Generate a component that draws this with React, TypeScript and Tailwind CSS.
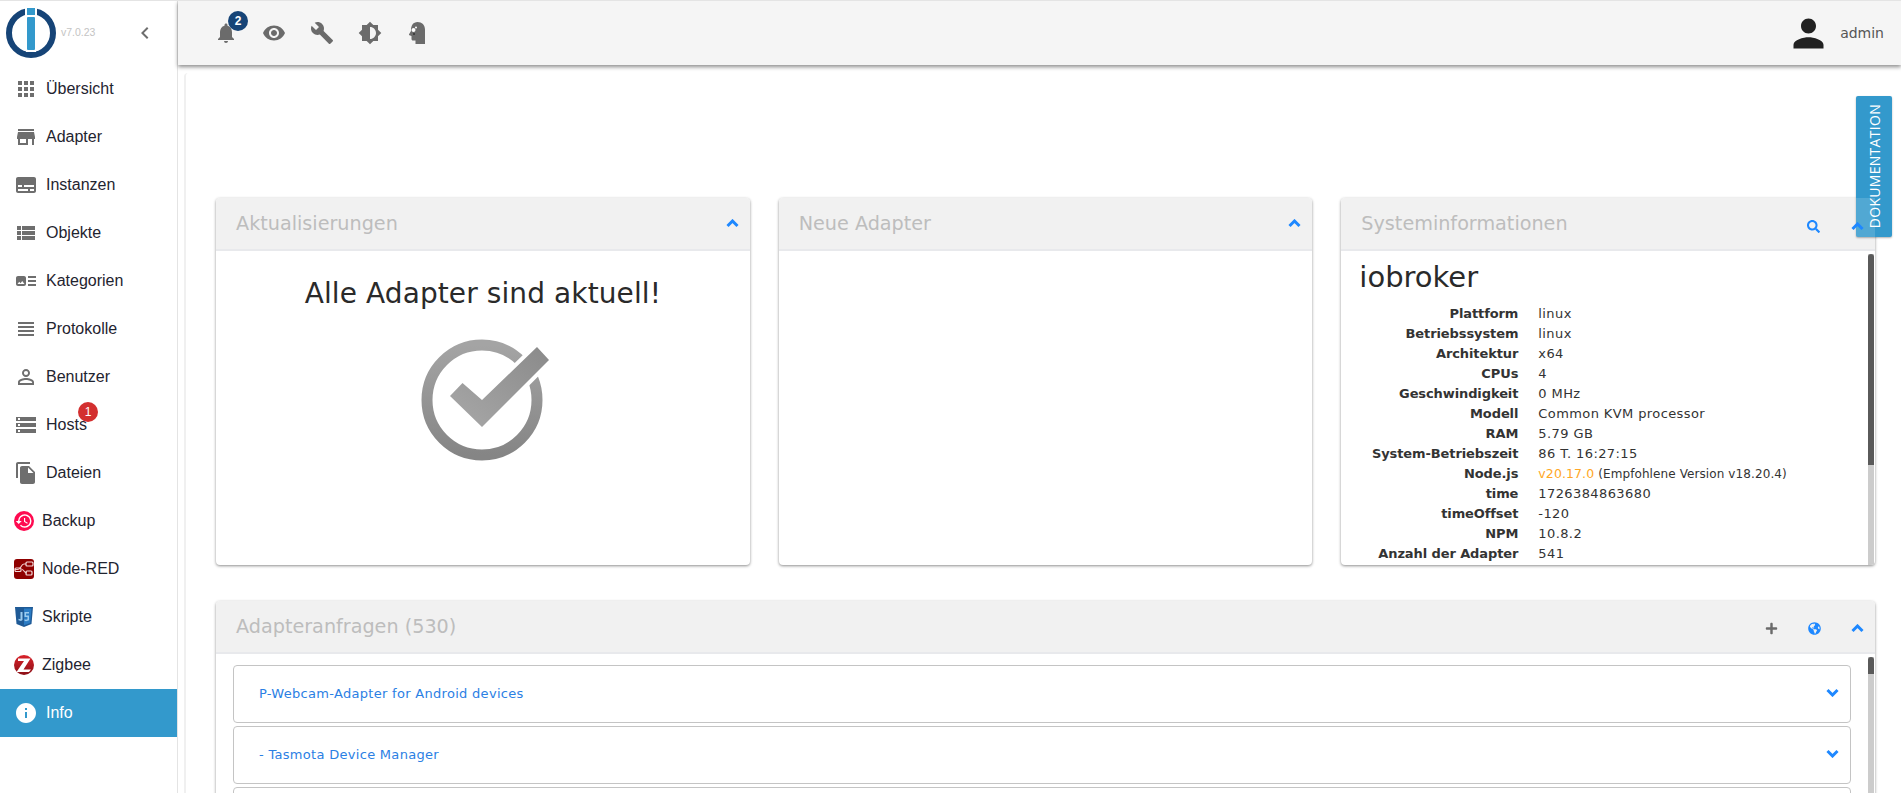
import React from 'react';
import {
  MdApps, MdStore, MdSubtitles, MdViewList, MdArtTrack, MdViewHeadline, MdPermIdentity,
  MdStorage, MdFileCopy, MdInfo, MdNotifications, MdVisibility, MdBuild, MdBrightness6,
  MdPerson, MdHistory, MdChevronLeft,
} from 'react-icons/md';
import { FaSearch, FaPlus, FaGlobeAmericas } from 'react-icons/fa';

const bodyFont = "font-['DejaVu_Sans',sans-serif]";

const Logo = () => (
  <svg width="52" height="52" viewBox="0 0 52 52" className="shrink-0">
    <circle cx="25" cy="26" r="22" fill="none" stroke="#164477" strokeWidth="6" />
    <rect x="19" y="0" width="12" height="12" fill="#fff" />
    <rect x="21" y="1" width="8" height="7" fill="#3399cc" />
    <rect x="20" y="9" width="10" height="36" fill="#fff" />
    <rect x="21" y="10" width="8" height="33" rx="1" fill="#3399cc" />
  </svg>
);

const Chevron = ({ down, className }: { down?: boolean; className?: string }) => (
  <svg width="13" height="9" viewBox="0 0 13 9" className={`shrink-0 ${className ?? ''}`}>
    <path d={down ? 'M1.500 2L6.500 7L11.500 2' : 'M1.500 7L6.500 2L11.500 7'} fill="none" stroke="#1e88ff" strokeWidth="3" />
  </svg>
);

const BackupIcon = () => (
  <span className="flex h-5 w-5 items-center justify-center rounded-full bg-[#ff0a50] text-white">
    <MdHistory size={18} />
  </span>
);

const NodeRedIcon = () => (
  <svg width="20" height="20" viewBox="0 0 20 20">
    <rect width="20" height="20" rx="3" fill="#8f0000" />
    <path d="M1 10.500h3c3 0 3-5.500 6-5.500h2M8 10.500c2 0 2 3.500 5 3.500" fill="none" stroke="#f3c9c9" strokeWidth="1.200" />
    <rect x="12" y="3" width="7" height="4" rx="1" fill="none" stroke="#f3dada" strokeWidth="1.200" />
    <rect x="12" y="12" width="6" height="4" rx="1" fill="none" stroke="#f3dada" strokeWidth="1.200" />
    <rect x="1" y="9" width="6" height="3.500" rx="1" fill="none" stroke="#f3dada" strokeWidth="1.200" />
  </svg>
);

const JsIcon = () => (
  <svg width="20" height="20" viewBox="0 0 20 20">
    <path d="M1 0h18l-1.500 17L10 20l-7.500-3z" fill="#1f5a96" />
    <path d="M10 1.500h7.500L16.200 16 10 18.200z" fill="#2b7cc4" />
    <path d="M8.500 5v8l-1.500 1-2.500-.8v-1.500l2 .6V5zM15 5h-4.500v5h3v2.200l-1.500.6-1.500-.5v1.400l1.500.6 3-1V8.500h-3V6.500H15z" fill="#9ccbee" />
  </svg>
);

const ZigbeeIcon = () => (
  <svg width="20" height="20" viewBox="0 0 20 20">
    <defs>
      <linearGradient id="zigbeeFill" x1="0" y1="0" x2="0" y2="1">
        <stop offset="0" stopColor="#d9222a" />
        <stop offset="1" stopColor="#8a0f16" />
      </linearGradient>
    </defs>
    <circle cx="10" cy="10" r="10" fill="url(#zigbeeFill)" />
    <path d="M4 3.500h12.500L9.500 14.500h7.500L15 17H2.500L10 6H4z" fill="#fff" />
  </svg>
);

const HeadIcon = () => (
  <svg width="16" height="22" viewBox="0 0 16 22" className="ml-[3px]">
    <path d="M8.500 0C13 0 16 3 16 7.500V22H6.500v-3.500H4c-1 0-1.500-.7-1.500-1.500v-3L.4 13.200c-.5-.3-.5-.7-.2-1.100L2 9C1.700 4 4 0 8.500 0z" fill="#6b6b6b" />
    <circle cx="4.500" cy="8" r="2" fill="#fff" />
    <circle cx="7" cy="5.500" r="1" fill="#fff" />
    <circle cx="5" cy="12" r="1" fill="#333" />
  </svg>
);

const CheckBadge = () => (
  <svg width="122" height="124" viewBox="0 0 122 124" className="overflow-visible">
    <defs>
      <linearGradient id="ringFill" x1="0" y1="0" x2="0" y2="1">
        <stop offset="0" stopColor="#a4a4a4" />
        <stop offset="1" stopColor="#858585" />
      </linearGradient>
      <linearGradient id="markFill" x1="0" y1="1" x2="1" y2="0">
        <stop offset="0" stopColor="#a8a8a8" />
        <stop offset="1" stopColor="#8a8a8a" />
      </linearGradient>
    </defs>
    <circle cx="60" cy="62" r="55" fill="none" stroke="url(#ringFill)" strokeWidth="11" />
    <path d="M115 9 L127 22 L60 89 L28 58 L40.500 45 L60 62 Z" fill="url(#markFill)" stroke="#fff" strokeWidth="8" paintOrder="stroke" />
  </svg>
);

const navItems = [
  { label: 'Übersicht', icon: <MdApps size={24} /> },
  { label: 'Adapter', icon: <MdStore size={24} /> },
  { label: 'Instanzen', icon: <MdSubtitles size={24} /> },
  { label: 'Objekte', icon: <MdViewList size={24} /> },
  { label: 'Kategorien', icon: <MdArtTrack size={24} /> },
  { label: 'Protokolle', icon: <MdViewHeadline size={24} /> },
  { label: 'Benutzer', icon: <MdPermIdentity size={24} /> },
  { label: 'Hosts', icon: <MdStorage size={24} />, badge: '1' },
  { label: 'Dateien', icon: <MdFileCopy size={24} /> },
  { label: 'Backup', icon: <BackupIcon />, custom: true },
  { label: 'Node-RED', icon: <NodeRedIcon />, custom: true },
  { label: 'Skripte', icon: <JsIcon />, custom: true },
  { label: 'Zigbee', icon: <ZigbeeIcon />, custom: true },
  { label: 'Info', icon: <MdInfo size={24} />, active: true },
];

const systemRows: [string, React.ReactNode][] = [
  ['Plattform', 'linux'],
  ['Betriebssystem', 'linux'],
  ['Architektur', 'x64'],
  ['CPUs', '4'],
  ['Geschwindigkeit', '0 MHz'],
  ['Modell', 'Common KVM processor'],
  ['RAM', '5.79 GB'],
  ['System-Betriebszeit', '86 T. 16:27:15'],
  ['Node.js', (
    <span className="text-[12px] tracking-[0.1px]">
      <span className="text-[12.5px] text-[#ffa726]">v20.17.0</span> (Empfohlene Version v18.20.4)
    </span>
  )],
  ['time', '1726384863680'],
  ['timeOffset', '-120'],
  ['NPM', '10.8.2'],
  ['Anzahl der Adapter', '541'],
];

const CardHeader = ({ title, gap = 'gap-[29px]', children }: { title: string; gap?: string; children: React.ReactNode }) => (
  <div className="flex h-[53px] shrink-0 items-center justify-between border-b-2 border-[#e8e9ec] bg-[#f1f1f1] pl-5 pr-[11px]">
    <span className="mt-[1px] text-[19.2px] text-[#bdbdbd]">{title}</span>
    <div className={`flex items-center ${gap}`}>{children}</div>
  </div>
);

const Scroll = ({ thumb }: { thumb: string }) => (
  <div className="absolute bottom-0 right-[1px] top-[3px] w-[6px] bg-[#cccccc]">
    <div className={`w-full rounded-t-[3px] bg-[#5a5a5a] ${thumb}`} />
  </div>
);

const RequestRow = ({ title }: { title?: string }) => (
  <div className="flex h-[58px] shrink-0 items-center justify-between rounded-[4px] border border-[#c4c4c4] pl-[25px] pr-[11px]">
    <span className="text-[13px] tracking-[0.3px] text-[#2b80e4]">{title}</span>
    <Chevron down className="mt-[-3px]" />
  </div>
);

export default function App() {
  return (
    <div className={`relative flex h-[793px] overflow-hidden border-t border-[#e4e4e4] bg-white ${bodyFont}`}>
      <aside className="w-[178px] shrink-0 border-r border-[#e4e4e4] font-['Liberation_Sans',sans-serif]">
        <div className="flex h-[64px] items-center pl-[6px] pr-[20px]">
          <Logo />
          <span className="ml-[3px] mt-[-1px] text-[10.5px] text-[#c4c4c4]">v7.0.23</span>
          <MdChevronLeft size={24} className="ml-auto text-[#6e6e6e]" />
        </div>
        <nav>
          {navItems.map(item => (
            <div
              key={item.label}
              className={`relative flex h-12 items-center pl-[14px] ${item.active ? 'bg-[#3399cc] text-white' : 'text-[#1f2430]'}`}
            >
              <span className={`flex shrink-0 items-center ${item.custom ? 'w-[28px]' : 'w-[32px]'} ${item.active ? 'text-white' : 'text-[#6e6e6e]'}`}>
                {item.icon}
              </span>
              <span className="text-base">{item.label}</span>
              {item.badge && (
                <span className="absolute left-[78px] top-[1px] flex h-5 w-5 items-center justify-center rounded-full bg-[#d32f2f] text-xs text-white">
                  {item.badge}
                </span>
              )}
            </div>
          ))}
        </nav>
      </aside>

      <div className="flex min-w-0 flex-1 flex-col">
        <header className="relative z-10 flex h-[64px] shrink-0 items-center bg-[#f5f5f5] pl-[36px] pr-[17px] shadow-[0_2px_4px_rgba(0,0,0,0.45)]">
          <div className="flex items-center gap-[24px] text-[#6b6b6b]">
            <span className="relative">
              <MdNotifications size={24} />
              <span className="absolute left-[14px] top-[-10px] flex h-5 w-5 items-center justify-center rounded-full bg-[#164477] font-['Liberation_Sans',sans-serif] text-xs font-bold text-white">2</span>
            </span>
            <MdVisibility size={24} />
            <MdBuild size={24} />
            <MdBrightness6 size={24} />
            <HeadIcon />
          </div>
          <div className="ml-auto flex items-center gap-[9px]">
            <MdPerson size={45} className="text-[#212121]" />
            <span className="mt-[1px] text-[14px] text-[#555555]">admin</span>
          </div>
        </header>

        <main className="ml-[6px] mt-[8px] flex-1 overflow-hidden rounded-tl-[4px] border-l-2 border-[#f0f0f0] bg-white pl-[30px] pr-[26px] pt-[125px]">
          <div className="grid grid-cols-3 gap-[29px]">
            <section className="flex h-[367px] flex-col overflow-hidden rounded-[4px] bg-white shadow-[0_1px_3px_rgba(0,0,0,0.45)]">
              <CardHeader title="Aktualisierungen">
                <Chevron />
              </CardHeader>
              <div className="flex flex-col items-center pt-[25px]">
                <div className="text-[28px] leading-[36px] tracking-[0.1px] text-[#2a2a2a]">Alle Adapter sind aktuell!</div>
                <div className="mt-[26px]">
                  <CheckBadge />
                </div>
              </div>
            </section>

            <section className="flex h-[367px] flex-col overflow-hidden rounded-[4px] bg-white shadow-[0_1px_3px_rgba(0,0,0,0.45)]">
              <CardHeader title="Neue Adapter">
                <Chevron />
              </CardHeader>
            </section>

            <section className="flex h-[367px] flex-col overflow-hidden rounded-[4px] bg-white shadow-[0_1px_3px_rgba(0,0,0,0.45)]">
              <CardHeader title="Systeminformationen" gap="gap-[31px]">
                <FaSearch size={13} className="mt-[6px] text-[#1e88ff]" />
                <Chevron className="relative z-20 mt-[6px]" />
              </CardHeader>
              <div className="relative min-h-0 flex-1 overflow-hidden pl-[18px]">
                <Scroll thumb="h-[211px]" />
                <div className="pt-[6px] text-[29px] leading-[40px] text-[#2a2a2a]">iobroker</div>
                <div className="mt-[7px] grid grid-cols-[159px_1fr] gap-x-[20px] text-[13px] leading-[20px] text-[#333333]">
                  {systemRows.map(([label, value]) => (
                    <React.Fragment key={label}>
                      <span className="whitespace-nowrap text-right font-bold tracking-[-0.1px]">{label}</span>
                      <span className="whitespace-nowrap tracking-[0.4px]">{value}</span>
                    </React.Fragment>
                  ))}
                </div>
              </div>
            </section>
          </div>

          <section className="mt-[36px] flex h-[300px] flex-col overflow-hidden rounded-[4px] bg-white shadow-[0_1px_3px_rgba(0,0,0,0.45)]">
            <CardHeader title="Adapteranfragen (530)" gap="gap-[30px]">
              <FaPlus size={13} className="mt-[4px] text-[#6b6b6b]" />
              <FaGlobeAmericas size={13} className="mt-[4px] text-[#1e88ff]" />
              <Chevron className="mt-[3px]" />
            </CardHeader>
            <div className="relative min-h-0 flex-1 overflow-hidden pl-[17px] pr-[24px] pt-[11px]">
              <Scroll thumb="h-[17px]" />
              <div className="flex flex-col gap-[3px]">
                <RequestRow title="P-Webcam-Adapter for Android devices" />
                <RequestRow title="- Tasmota Device Manager" />
                <RequestRow />
              </div>
            </div>
          </section>
        </main>
      </div>

      <div className="absolute right-[9px] top-[95px] z-10 flex h-[141px] w-[36px] items-center justify-center overflow-hidden rounded-[2px] bg-[#3399cc] shadow-[0_1px_2px_rgba(0,0,0,0.3)]">
        <span className="absolute bottom-0 left-0 h-[39px] w-[19px] bg-white/15" />
        <span className="relative rotate-180 font-['Open_Sans',sans-serif] text-[14px] tracking-[0.3px] text-white [writing-mode:vertical-rl]">DOKUMENTATION</span>
      </div>
    </div>
  );
}
